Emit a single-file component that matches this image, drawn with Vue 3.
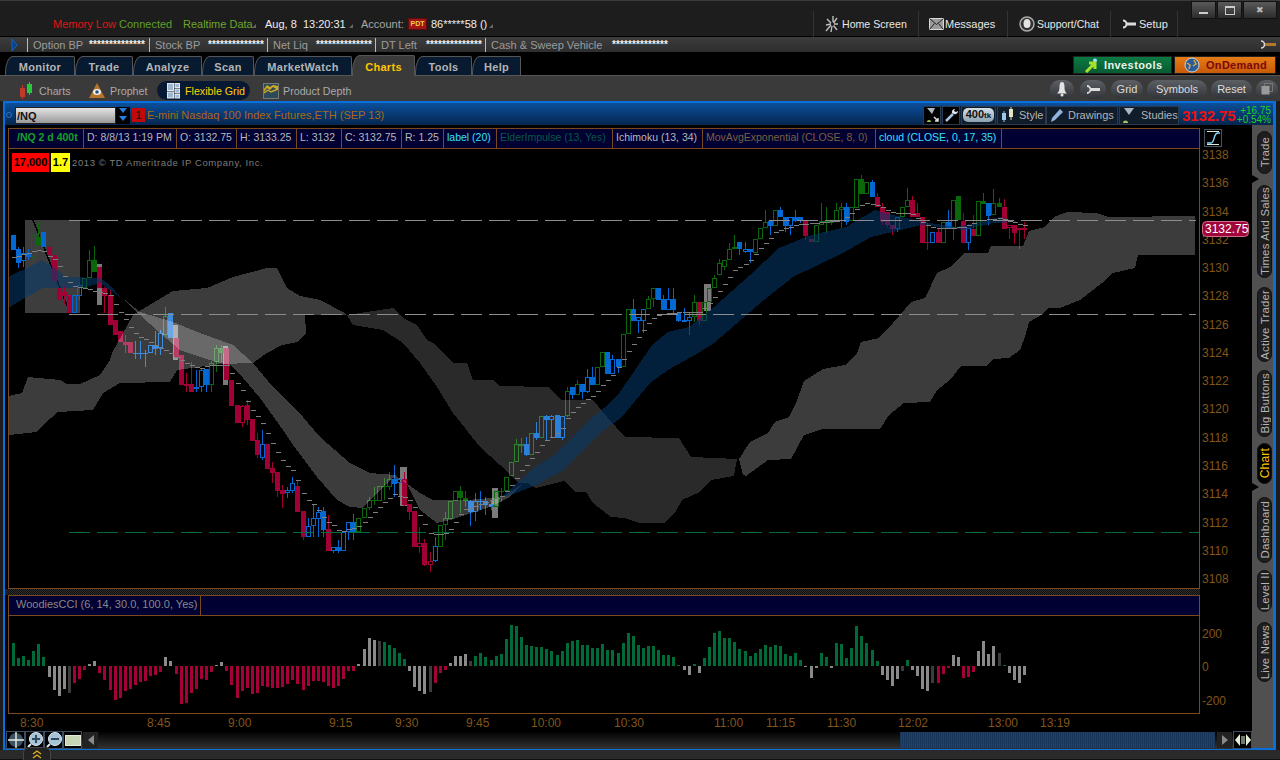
<script setup>
const info = [
  { label: 'Option BP', w: 122, lw: 56 },
  { label: 'Stock BP', w: 118, lw: 53 },
  { label: 'Net Liq', w: 108, lw: 43 },
  { label: 'DT Left', w: 110, lw: 45 },
  { label: 'Cash & Sweep Vehicle', w: 190, lw: 121 },
]
const tabs = [
  { t: 'Monitor', w: 70 }, { t: 'Trade', w: 58 }, { t: 'Analyze', w: 69 }, { t: 'Scan', w: 52 },
  { t: 'MarketWatch', w: 98 }, { t: 'Charts', w: 63, on: true }, { t: 'Tools', w: 57 }, { t: 'Help', w: 49 },
]
const pills = [
  { t: 'Grid', w: 32 }, { t: 'Symbols', w: 60 }, { t: 'Reset', w: 41 },
]
const legend = [
  { t: '/NQ 2 d 400t', w: 75, c: 'sym' }, { t: 'D: 8/8/13 1:19 PM', w: 93 }, { t: 'O: 3132.75', w: 60 },
  { t: 'H: 3133.25', w: 60 }, { t: 'L: 3132', w: 45 }, { t: 'C: 3132.75', w: 60 }, { t: 'R: 1.25', w: 42 },
  { t: 'label (20)', w: 53, c: 'cy' }, { t: 'ElderImpulse (13, Yes)', w: 116, c: 'el' }, { t: 'Ichimoku (13, 34)', w: 90 },
  { t: 'MovAvgExponential (CLOSE, 8, 0)', w: 173, c: 'ma' }, { t: 'cloud (CLOSE, 0, 17, 35)', w: 126, c: 'cy' },
]
const sideTabs = [
  { t: 'Trade', h: 43, m: 6 }, { t: 'Times And Sales', h: 93, m: 11 }, { t: 'Active Trader', h: 75, m: 9 },
  { t: 'Big Buttons', h: 67, m: 8 }, { t: 'Chart', h: 41, m: 6, on: true }, { t: 'Dashboard', h: 66, m: 13 },
  { t: 'Level II', h: 42, m: 7 }, { t: 'Live News', h: 60, m: 10 },
]
const priceLabels = [3138, 3136, 3134, 3132, 3130, 3128, 3126, 3124, 3122, 3120, 3118, 3116, 3114, 3112, 3110, 3108]
  .map((p, i) => ({ p, y: Math.round(159 + i * 28.27) }))
const timeLabels = [
  ['8:30', 20], ['8:45', 147], ['9:00', 228], ['9:15', 329], ['9:30', 395], ['9:45', 466], ['10:00', 531],
  ['10:30', 614], ['11:00', 714], ['11:15', 766], ['11:30', 827], ['12:02', 898], ['13:00', 988], ['13:19', 1040],
]

const colors = { g: '#0a680a', b: '#0468d2', r: '#a00036' }
const candles = `B235,250 B249,263,247,268 b253,261,247,267 B253,257,249,260 g235,258,235,262 G237,245,222,246 B232,247 r247,255,245,258
r255,281 r288,300 r292,296,285,305 r295,313 b295,313 b285,296,282,300 g278,288 g260,278,250,278 G260,272,246,272 r267,288 r288,296,287,313
r295,325,290,325 r320,335 r331,342 r342,345,335,353 r342,353 B353,354,341,359 B353,354,341,359 B353,354,350,367 b345,353 B345,349,331,355
b333,348,330,355 g316,335,307,335 B313,338 r338,357 r355,385 r384,386,373,392 r384,392,362,392 B387,389,370,392 b370,387,368,392 B369,385,369,392
g363,385,361,392 g348,362,345,372 G348,353,345,362 r348,380 r380,406 r405,423 R406,423,405,427 r405,420,400,425 r419,441 r440,455,433,458
b444,458,430,460 r444,469 r468,473,462,483 r472,491,472,497 r490,494,485,508 b490,493,487,498 b483,491,477,493 r486,512,480,512 r511,537,511,540
b526,537,518,537 b518,526,505,537 b512,519,507,537 B511,530,507,537 r529,551,515,551 b547,551,547,553 B547,551,540,553 b532,551 b522,532,522,540
B522,532,514,540 g518,532 g508,518 g500,508,497,510 G500,501,487,505 g486,501 G486,487,478,500 g479,487,472,490 B479,484,465,497 b479,483,478,497
r479,505,472,506 r504,512,504,520 r511,547 R543,547,527,553 r543,565,539,566 R561,565,552,572 b546,561,537,562 g525,547 g518,525,512,540 g501,519
g491,501 G491,498,486,513 G498,501,491,507 B501,512,500,526 b501,512,493,521 B501,502,491,510 B501,505,497,515 B504,507,501,510 g491,507 G491,492,488,502 g477,491
g462,476 g444,462,439,462 G444,446,438,453 B444,455,437,456 g433,455 B433,438,422,440 g416,438 B416,420,415,440 b416,420,415,438 B415,438
b416,438,416,440 g391,416,387,417 B387,395,387,399 g384,395,380,395 B384,392,384,399 b377,392,369,393 B377,385,367,385 g367,385 g352,367 B352,374
b359,374,355,374 B359,367,359,373 g334,367 g309,334 B309,321,299,321 b317,321,317,333 b309,321,309,333 g299,309,296,309 g288,299,288,307 B288,300
B299,310,295,310 b299,310,288,310 B299,310,288,313 B313,321,313,322 B320,322,308,322 b317,321,312,335 g302,317,295,322 r302,321,302,325 g302,321 g288,302
g278,288,275,288 g263,275,259,275 g260,267,260,270 g249,260,243,260 g247,249,235,249 B242,249,242,255 b249,252,242,253 B249,252,249,263 g239,253 g228,239
g222,228,210,228 B221,226,221,235 g210,226 B210,217,207,217 B217,226,217,232 b217,226,217,235 B217,221,210,222 B217,221,217,223 r221,236,221,240 r239,242
g225,242 g221,225,203,225 G221,223,207,233 G221,223,221,225 g210,221,203,221 g207,210,203,228 B207,222,203,225 g207,221 g179,208 G179,194,175,194
g182,194 B182,197,180,197 r197,207,193,207 r207,222,203,225 r212,225,212,227 r225,229,225,235 b217,229,217,232 g207,217 g200,207,188,207 r200,217,196,217
r213,217,203,217 r217,243 r242,243,223,250 b232,243 r232,243,228,243 g222,243 B222,228,210,228 g200,228,200,240 G196,220 r221,243,213,243
b228,243,228,250 r229,236,215,236 g201,236 G201,204,193,204 B203,216,203,225 g203,215,189,215 G203,207,198,207 r207,229,199,229 R225,228,225,239 r225,233,225,244
r228,230,228,249 r228,230,222,239`
  .trim().split(/\s+/).map((s, i) => {
    const t = s[0]
    const [a, b, c, d] = s.slice(1).split(',').map(Number)
    const x = Math.round(13 + 5.08 * i)
    return {
      id: i, x, top: a, bot: b, wt: c ?? a, wb: d ?? b,
      hollow: t === 'g' || t === 'b' || t === 'R',
      color: colors[t.toLowerCase()],
    }
  })

const highlights = [
  [97, 264, 5, 41], [173, 325, 5, 35], [223, 346, 5, 39], [400, 467, 7, 39], [492, 488, 6, 30], [704, 284, 7, 27],
]

const trail = [[13, 257], [40, 249], [55, 260], [60, 268], [65, 278], [72, 285], [110, 295], [118, 309], [124, 317], [132, 330], [137, 335], [147, 340], [190, 365], [200, 368], [210, 365], [227, 365], [232, 375], [242, 390], [250, 407], [262, 423], [267, 433], [277, 452], [283, 462], [292, 470], [298, 482], [302, 492], [308, 500], [315, 505], [325, 520], [333, 525], [340, 532], [355, 527], [363, 523], [372, 514], [378, 508], [383, 503], [393, 494], [408, 498], [422, 520], [428, 533], [440, 534], [448, 532], [463, 510], [477, 505], [500, 497], [510, 487], [521, 470], [525, 466], [541, 445], [546, 440], [561, 430], [568, 416], [580, 404], [593, 395], [607, 380], [614, 373], [632, 345], [641, 333], [646, 325], [655, 316], [668, 313], [680, 312], [700, 312], [711, 301], [718, 292], [723, 285], [734, 270], [743, 265], [750, 260], [754, 255], [759, 249], [768, 240], [775, 232], [786, 228], [795, 225], [812, 223], [843, 220], [857, 208], [864, 203], [879, 205], [893, 213], [911, 213], [929, 227], [943, 228], [964, 227], [979, 220], [1000, 218], [1014, 222], [1023, 225]]
const trailAt = x => {
  for (let k = 1; k < trail.length; k++) {
    if (x <= trail[k][0]) {
      const [x0, y0] = trail[k - 1]
      const [x1, y1] = trail[k]
      return Math.round(y0 + (y1 - y0) * (x - x0) / (x1 - x0))
    }
  }
  return 225
}
const ticks = candles.map(c => ({ id: c.id, x: c.x - 1, y: trailAt(c.x) }))

const cloudA = '9,396 22,393 28,377 60,380 67,384 80,384 100,375 110,360 112,353 133,315 173,291 207,288 233,277 267,268 277,268 287,288 300,296 320,300 343,312 347,315 305,315 306,333 297,342 282,345 267,353 253,363 220,364 177,370 170,382 120,383 103,393 93,410 58,412 43,425 37,432 9,435'
const band = '120,296 140,312 173,322 200,333 233,345 253,363 273,387 297,410 320,437 350,463 370,473 395,475 420,493 433,500 467,500 503,497 521,485 510,497 490,507 450,520 437,523 420,510 405,480 392,478 363,508 350,507 337,500 317,477 293,445 283,430 260,398 243,378 230,365 220,363 200,357 180,350 160,333 140,315'
const cloudB = '347,315 393,308 403,318 417,325 427,340 433,343 453,363 467,363 473,380 493,380 500,386 548,387 561,400 593,400 607,417 625,437 679,438 691,457 737,459 734,476 711,480 700,492 682,500 675,513 664,523 639,523 625,518 611,517 593,503 586,492 575,492 564,481 536,488 527,483 518,483 500,465 480,447 453,413 437,387 420,363 403,343 383,330 353,325'
const cloudC = '739,459 750,442 768,433 775,422 789,417 796,403 804,381 823,369 845,365 857,353 861,342 879,338 893,323 911,302 925,298 937,273 950,267 964,253 988,253 991,246 1023,246 1029,231 1045,227 1054,217 1067,212 1097,213 1108,217 1195,216 1195,255 1138,255 1135,268 1113,273 1102,283 1080,300 1060,308 1048,308 1043,314 1029,322 1025,337 1020,350 1009,358 993,359 986,366 961,366 950,380 937,390 930,402 904,403 889,415 880,429 823,429 804,435 791,459 768,460 757,468 746,476 743,475'
const ribbonL = '8,277 33,265 42,260 53,267 67,277 100,278 110,285 120,297 100,283 83,288 67,288 43,288 25,298 8,308'
const ribbonR = '500,498 534,468 554,455 593,417 604,408 620,392 652,345 668,332 689,327 714,307 750,275 779,248 811,235 846,227 875,210 893,215 929,223 957,227 1000,217 1018,222 993,223 964,230 921,225 893,232 871,237 843,253 793,277 764,300 714,343 700,352 668,370 650,383 621,418 600,433 564,470 536,485 511,495'

const cciColors = { g: '#006b38', r: '#a4003a', n: '#8a8a8a', d: '#3c3c3c' }
const cci = `g23 g8 g10 g6 g15 g22 g9 n-11 n-24 n-30 n-23 d-27 r-17 r-13 r-4 n2 n5 r-7 r-14 r-24 r-34 r-32 r-25 r-23 r-19 r-16 r-15 r-10 r-9 r-6 n9 n5 r-8 r-38 r-37 r-27 r-23 r-13 r-14 r-6 n1 n4 r-5 r-19 r-32 r-25 r-22 r-28 r-27 r-20 r-21 r-22 r-22 r-21 r-18 r-14 r-18 r-24 r-20 r-15 r-15 r-16 r-20 r-22 r-20 r-13 r-5 r-5 n2 n17 n28 n26 d25 g24 g21 g18 g13 g7 n-5 n-21 n-25 n-28 d-26 r-17 r-7 r-4 n3 n10 n10 n12 d5 g10 g13 g9 g6 g10 g12 g27 g41 g40
g29 g21 g20 g19 g19 g17 g15 g11 g15 g23 g25 g26 g21 g21 g18 g18 g22 g16 g16 g13 g23 g33 g30 g21 g18 g20 g20 g16 g11 g11 g9 g1 n-4 n-9 g2 n-7 g8 g19 g33 g35 g28 g28 g24 g17 g15 g10 g13 g17 g21 g19 g21 g20 g12 g10 g13 g6 n-1 n-12 n-2 g13 g9 n-2 g23 g22 g8 g18 g40 g30 g23 g16 g5 n-9 n-14 n-20 n-13 d-5 g6 n-4 n-10 n-23 n-25 d-17 r-17 r-8 r-2 n11 n9 r-12 r-11 r-6 n15 n25 n12 n20 d13 g1 n-7 n-14 n-17 n-9`
  .trim().split(/\s+/).map((s, i) => {
    const v = Number(s.slice(1))
    return {
      id: i, x: Math.round(12 + 5.08 * i), y: v > 0 ? 666 - v : 666, h: Math.abs(v), color: cciColors[s[0]],
    }
  })
</script>

<template>
  <div class="app">
    <header class="topbar">
      <div class="status">
        <span class="mem">Memory Low</span>
        <span class="conn">Connected</span>
        <span class="rt">Realtime Data</span>
        <i class="tri rt-tri"></i>
        <span class="date">Aug, 8 &nbsp;13:20:31</span>
        <i class="tri date-tri"></i>
        <span class="acct">Account:</span>
        <span class="pdt">PDT</span>
        <span class="num">86*****58 ()</span>
        <i class="tri"></i>
      </div>
      <nav class="nav">
        <div class="nav-item home">
          <svg width="14" height="19" viewBox="0 0 14 19"><path d="M8 1v6M12 3L8.5 8M13 9H9M12 15L8.500 10.500M6 17l1-6M1 16l5-6M1 10l5-1M2 4l4 4" stroke="#bdbdbd" stroke-width="1.400" fill="none"/></svg>
          <span>Home Screen</span>
        </div>
        <div class="nav-item mail">
          <svg width="15" height="12" viewBox="0 0 15 12"><rect x=".5" y=".5" width="14" height="11" fill="#9a9a9a" stroke="#d8d8d8"/><path d="M.5.5l7 6 7-6M.5 11.500l5-6M14.500 11.500l-5-6" stroke="#222" fill="none"/></svg>
          <span>Messages</span>
        </div>
        <div class="nav-item chat">
          <svg width="16" height="16" viewBox="0 0 16 16"><circle cx="8" cy="8" r="7" fill="#333" stroke="#aaa" stroke-width="1.500"/><ellipse cx="8" cy="7.500" rx="3.500" ry="4.500" fill="#e4e4e4"/></svg>
          <span>Support/Chat</span>
        </div>
        <div class="nav-item setup">
          <svg width="14" height="10" viewBox="0 0 14 10"><path d="M1 1.500a3.500 3.500 0 1 1 0 7" stroke="#ddd" stroke-width="2" fill="none"/><rect x="5" y="3.500" width="9" height="3" fill="#ddd"/></svg>
          <span>Setup</span>
        </div>
      </nav>
      <div class="winbtns">
        <button class="wb w1"><i class="min"></i></button>
        <button class="wb w1"><i class="max"></i></button>
        <button class="wb w2"><span>✖</span></button>
      </div>
    </header>

    <section class="infobar">
      <svg class="info-arrow" width="8" height="14" viewBox="0 0 8 14"><path d="M1 1l5 6-5 6z" fill="#0a3f8c" stroke="#1565c0"/></svg>
      <div v-for="it in info" :key="it.label" class="info-item" :style="{ width: it.w + 'px' }">
        <span class="info-label" :style="{ width: it.lw + 'px' }">{{ it.label }}</span>
        <span class="info-stars">**************</span>
      </div>
      <svg class="info-wrench" width="16" height="9" viewBox="0 0 16 9"><path d="M1 1a3.500 3.500 0 1 1 0 7" stroke="#d8d8d8" stroke-width="1.600" fill="none"/><rect x="5" y="3" width="11" height="3" fill="#b07a2a"/></svg>
    </section>

    <section class="tabrow">
      <div v-for="t in tabs" :key="t.t" class="tab" :class="{ on: t.on }" :style="{ width: t.w + 'px' }">{{ t.t }}</div>
      <div class="promo green">
        <svg width="15" height="15" viewBox="0 0 15 15"><circle cx="11" cy="2.500" r="2" fill="#9fe0ff"/><path d="M2 14L10 6M5 5h6v6" stroke="#a8e030" stroke-width="3" fill="none"/></svg>
        <span>Investools</span>
      </div>
      <div class="promo orange">
        <svg width="16" height="16" viewBox="0 0 16 16"><circle cx="8" cy="8" r="7" fill="#2c5c9a" stroke="#cfd8e0"/><path d="M3 6l3 2-1 4M10 3l2 4-3 2" stroke="#d9ab35" fill="none" stroke-width="1.500"/></svg>
        <span>OnDemand</span>
      </div>
    </section>

    <section class="subbar">
      <div class="sub s1">
        <svg width="14" height="18" viewBox="0 0 14 18"><rect x="1" y="6" width="5" height="9" fill="#c0392b"/><rect x="3" y="3" width="1" height="14" fill="#c0392b"/><rect x="8" y="2" width="5" height="9" fill="#27c93a"/><rect x="10" y="0" width="1" height="13" fill="#27c93a"/></svg>
        <span>Charts</span>
      </div>
      <div class="sub s2">
        <svg width="16" height="16" viewBox="0 0 16 16"><path d="M8 0L16 15H0z" fill="#b5742a"/><ellipse cx="8" cy="9" rx="4" ry="3" fill="#eee"/><circle cx="8" cy="9" r="1.800" fill="#2a4f80"/></svg>
        <span>Prophet</span>
      </div>
      <div class="sub s3">
        <svg width="13" height="16" viewBox="0 0 13 16"><rect x=".5" y=".5" width="6" height="7" fill="#9cb8d0" stroke="#e8e8e8"/><rect x=".5" y="9" width="6" height="6" fill="#9cb8d0" stroke="#e8e8e8"/><rect x="8" y=".5" width="4.500" height="4" fill="#9cb8d0" stroke="#e8e8e8"/><rect x="8" y="6" width="4.500" height="4" fill="#9cb8d0" stroke="#e8e8e8"/><rect x="8" y="11.500" width="4.500" height="3.500" fill="#9cb8d0" stroke="#e8e8e8"/></svg>
        <span>Flexible Grid</span>
      </div>
      <div class="sub s4">
        <svg width="16" height="16" viewBox="0 0 16 16"><rect x=".5" y=".5" width="15" height="15" fill="#2d4a5a" stroke="#777"/><path d="M1 9l3-4 3 2 3-3 5 3v-4l-5-1-3 2-3-2-3 4z" fill="#d0a820"/><path d="M1 10l4-3 3 2 7-3" stroke="#d0a820" stroke-width="1.400" fill="none"/></svg>
        <span>Product Depth</span>
      </div>
      <div class="sub-right">
        <button class="pill p-icon bell">
          <svg width="12" height="16" viewBox="0 0 12 16"><path d="M6 1C4 1 3.500 3 3.500 6 3.500 10 2.500 11 1 12.500h10C9.500 11 8.500 10 8.500 6 8.500 3 8 1 6 1z" fill="#e4e4e4"/><circle cx="6" cy="14" r="1.500" fill="#e4e4e4"/></svg>
        </button>
        <button class="pill p-icon wrench">
          <svg width="14" height="9" viewBox="0 0 14 9"><path d="M1 1a3.500 3.500 0 1 1 0 7" stroke="#ddd" stroke-width="1.800" fill="none"/><rect x="5" y="3" width="9" height="3" fill="#ddd"/></svg>
        </button>
        <button v-for="p in pills" :key="p.t" class="pill" :style="{ width: p.w + 'px' }">{{ p.t }}</button>
        <button class="pill p-icon copy">
          <svg width="12" height="12" viewBox="0 0 12 12"><rect x="3.500" y=".5" width="8" height="8" fill="none" stroke="#777"/><rect x=".5" y="3" width="8" height="8.500" fill="#9a9a9a"/></svg>
        </button>
      </div>
    </section>

    <main class="window">
      <div class="titlebar">
        <i class="dot"></i>
        <div class="symbol">/NQ</div>
        <div class="dd">
          <svg width="12" height="16" viewBox="0 0 12 16"><path d="M2 1h8L6 6zM2 9h8l-4 5z" fill="#2a7ce0"/></svg>
        </div>
        <div class="redone">1</div>
        <div class="fullname">E-mini Nasdaq 100 Index Futures,ETH (SEP 13)</div>
        <div class="tools">
          <div class="tool ic t1">
            <svg width="15" height="17" viewBox="0 0 15 17"><path d="M2 1h8L7 7z" fill="#aab6c0"/><path d="M2 15a2 2 0 1 1 4 0z" fill="#9ccb60"/><path d="M9 10l4 4m0-3v3h-3" stroke="#ddd" fill="none" stroke-width="1.500"/></svg>
          </div>
          <div class="tool ic t2">
            <svg width="15" height="16" viewBox="0 0 15 16"><path d="M2 14L9 7" stroke="#a7c3e0" stroke-width="2.500"/><path d="M8 6a3 3 0 0 1 3-4l-1 2 2 1 2-1a3 3 0 0 1-4 3z" fill="#dfe6ee"/></svg>
          </div>
          <div class="tool t3"><span>400<small>tk</small></span></div>
          <div class="tool t4">
            <svg width="13" height="16" viewBox="0 0 13 16"><rect x="1" y="6" width="4" height="7" fill="#9ec6ea"/><rect x="2.500" y="4" width="1" height="11" fill="#9ec6ea"/><rect x="8" y="2" width="4" height="8" fill="#e4e4c0"/><rect x="9.500" y="0" width="1" height="13" fill="#e4e4c0"/></svg>
            <span>Style</span>
          </div>
          <div class="tool t5">
            <svg width="14" height="16" viewBox="0 0 14 16"><path d="M1 15l1-4 8-9 3 3-8 8z" fill="#8fb3dc"/></svg>
            <span>Drawings</span>
          </div>
          <div class="tool t6">
            <svg width="14" height="17" viewBox="0 0 14 17"><path d="M2 1h10L7 8z" fill="#aab6c0"/><path d="M1 16a2.500 2.500 0 1 1 5 0z" fill="#9ccb60"/></svg>
            <span>Studies</span>
          </div>
        </div>
        <div class="lastprice">3132.75</div>
        <div class="change"><span>+16.75</span><span>+0.54%</span></div>
      </div>

      <div class="winbody">
        <div class="mainarea">
          <div class="row">
            <div class="panel pricepanel">
              <div class="legend">
                <div v-for="l in legend" :key="l.t" class="cell" :class="l.c" :style="{ width: l.w + 'px' }">{{ l.t }}</div>
              </div>
              <svg class="plot" width="1190" height="438" viewBox="9 149 1190 438" shape-rendering="crispEdges">
                <rect x="25" y="220" width="55" height="93" fill="#3d3d3d"/>
                <line x1="33" y1="220" x2="70" y2="313" stroke="#000" stroke-width="1.500"/>
                <rect v-for="(h, n) in highlights" :key="n" :x="h[0]" :y="h[1]" :width="h[2]" :height="h[3]" fill="#7a7a7a"/>
                <g v-for="c in candles" :key="c.id">
                  <rect :x="c.x" :y="c.wt" width="1" :height="c.top - c.wt" :fill="c.color"/>
                  <rect :x="c.x" :y="c.bot" width="1" :height="c.wb - c.bot" :fill="c.color"/>
                  <rect v-if="c.hollow" :x="c.x - 1.500" :y="c.top + 0.500" width="4" :height="c.bot - c.top - 1" fill="none" :stroke="c.color"/>
                  <rect v-else :x="c.x - 2" :y="c.top" width="5" :height="c.bot - c.top" :fill="c.color"/>
                </g>
                <polygon :points="cloudB" fill="#fff" fill-opacity=".165"/>
                <polygon :points="cloudA" fill="#fff" fill-opacity=".235"/>
                <polygon :points="band" fill="#fff" fill-opacity=".235"/>
                <polygon :points="cloudC" fill="#fff" fill-opacity=".235"/>
                <polygon :points="ribbonL" fill="#03386c" fill-opacity=".55"/>
                <polygon :points="ribbonR" fill="#03386c" fill-opacity=".55"/>
                <rect v-for="t in ticks" :key="t.id" :x="t.x" :y="t.y" width="5" height="1" fill="#7e7e7e"/>
                <line x1="69" y1="220.500" x2="1196" y2="220.500" stroke="#8c8c8c" stroke-dasharray="21 7"/>
                <line x1="69" y1="314.500" x2="1196" y2="314.500" stroke="#8c8c8c" stroke-dasharray="21 7"/>
                <line x1="69" y1="532.500" x2="1199" y2="532.500" stroke="#006b38" stroke-dasharray="21 7"/>
              </svg>
              <div class="badges">
                <span class="b-red">17,000</span>
                <span class="b-yel">1.7</span>
                <span class="copyright">2013 © TD Ameritrade IP Company, Inc.</span>
              </div>
            </div>
            <svg class="axis" width="53" height="461" viewBox="1200 128 53 461">
              <rect x="1204.500" y="129.500" width="17" height="17" fill="#000" stroke="#46525e"/>
              <path d="M1207 143h4c4 0 2-10 7-10h2" stroke="#7fd8ff" stroke-width="1.400" fill="none"/>
              <path d="M1207 144.500h12M1207 131.500h12" stroke="#d8e8d8"/>
              <text v-for="l in priceLabels" :key="l.p" class="axtext" x="1202" :y="l.y">{{ l.p }}</text>
              <rect x="1202.500" y="221.500" width="46" height="15" rx="4" fill="#a0063c" stroke="#d06a8a"/>
              <text class="tagtext" x="1205" y="233">3132.75</text>
            </svg>
          </div>
          <div class="divider"></div>
          <div class="row">
            <div class="panel ccipanel">
              <div class="legend cci-legend">
                <div class="cell cci-cell">WoodiesCCI (6, 14, 30.0, 100.0, Yes)</div>
              </div>
              <svg class="plot" width="1190" height="97" viewBox="9 616 1190 97" shape-rendering="crispEdges">
                <rect v-for="b in cci" :key="b.id" :x="b.x" :y="b.y" width="3" :height="b.h" :fill="b.color"/>
              </svg>
            </div>
            <svg class="axis" width="53" height="119" viewBox="1200 595 53 119">
              <text class="axtext" x="1202" y="638">200</text>
              <text class="axtext" x="1202" y="671">0</text>
              <text class="axtext" x="1202" y="705">-200</text>
            </svg>
          </div>
          <svg class="timeaxis" width="1247" height="17" viewBox="5 714 1247 17">
            <text v-for="t in timeLabels" :key="t[0]" class="axtext" :x="t[1]" y="727">{{ t[0] }}</text>
          </svg>
          <div class="toolbar">
            <button class="tb">
              <svg width="16" height="16" viewBox="0 0 16 16"><circle cx="8" cy="8" r="7" fill="#3c5166"/><path d="M8 0v16M0 8h16" stroke="#e8efe0" stroke-width="1.400"/></svg>
            </button>
            <button class="tb">
              <svg width="16" height="16" viewBox="0 0 16 16"><circle cx="9" cy="7" r="6.500" fill="#a6c4d8" stroke="#dfe9ee"/><path d="M9 3v8M5 7h8" stroke="#35485a" stroke-width="2"/><path d="M1 15l3-3" stroke="#dfe9ee" stroke-width="2"/></svg>
            </button>
            <button class="tb">
              <svg width="16" height="16" viewBox="0 0 16 16"><circle cx="9" cy="7" r="6.500" fill="#a6c4d8" stroke="#dfe9ee"/><path d="M5 7h8" stroke="#35485a" stroke-width="2"/><path d="M1 15l3-3" stroke="#dfe9ee" stroke-width="2"/></svg>
            </button>
            <button class="tb tb-rect"><i></i></button>
            <button class="sc left"><svg width="6" height="10" viewBox="0 0 6 10"><path d="M6 0v10L0 5z" fill="#8a8a8a"/></svg></button>
            <div class="track"><div class="thumb"></div></div>
            <button class="sc"><svg width="6" height="10" viewBox="0 0 6 10"><path d="M0 0v10l6-5z" fill="#8a8a8a"/></svg></button>
            <button class="tb tb-end">
              <svg width="16" height="12" viewBox="0 0 16 12"><path d="M5 0v12L0 6zM11 0v12l5-6z" fill="#e4efd8"/><path d="M7 2v8M9 2v8" stroke="#e4efd8"/></svg>
            </button>
          </div>
        </div>
        <aside class="sidebar">
          <div v-for="s in sideTabs" :key="s.t" class="sidetab" :class="{ on: s.on }" :style="{ height: s.h + 'px', marginTop: s.m + 'px' }">
            <span>{{ s.t }}</span>
          </div>
          <i class="notch n1"></i>
          <i class="notch n2"></i>
        </aside>
      </div>
    </main>
    <div class="foot">
      <div class="uptab">
        <svg width="10" height="9" viewBox="0 0 10 9"><path d="M1 4l4-3 4 3M1 8l4-3 4 3" stroke="#e0b020" stroke-width="1.300" fill="none"/></svg>
      </div>
    </div>
  </div>
</template>

<style>
html, body { margin: 0; background: #1b1b1b; }
</style>

<style scoped>
.app {
  position: relative;
  width: 1280px;
  height: 760px;
  overflow: hidden;
  display: flex;
  flex-direction: column;
  background: #1c1c1c;
  font-family: "Liberation Sans", Arial, sans-serif;
  font-size: 11px;
  color: #ccc;
}
button { border: 0; padding: 0; margin: 0; font: inherit; color: inherit; background: none; }

/* top bar */
.topbar {
  height: 35px;
  flex: none;
  display: flex;
  border-top: 1px solid #3a3a3a;
  border-bottom: 1px solid #000;
  background: #1d1d1d;
  position: relative;
}
.status { display: flex; align-items: center; padding: 13px 0 0 53px; height: 19px; white-space: nowrap; }
.mem { color: #e01414; width: 66px; }
.conn { color: #5f9e28; width: 64px; }
.rt { color: #6fa52c; width: 69px; }
.tri { width: 0; height: 0; margin: 5px 0 0 0; border-left: 4px solid transparent; border-bottom: 4px solid #666; }
.rt-tri { margin-right: 9px; }
.date { color: #eee; width: 84px; }
.date-tri { margin-right: 8px; }
.acct { color: #a8a8a8; width: 47px; }
.pdt { width: 19px; height: 12px; margin-right: 4px; background: #a01515; border: 1px solid #5c0c0c; box-sizing: border-box; font-size: 7px; font-weight: bold; color: #f0d040; text-align: center; line-height: 10px; }
.num { color: #eee; margin-right: 2px; }
.nav { position: absolute; left: 813px; top: 1px; height: 35px; display: flex; }
.nav-item { display: flex; align-items: center; gap: 3px; box-sizing: border-box; height: 26px; margin-top: 9px; border-left: 1px solid #333; color: #e8e8e8; padding-left: 11px; white-space: nowrap; }
.home { width: 105px; font-size: 10.600px; }
.mail { width: 89px; padding-left: 10px; gap: 1px; }
.chat { width: 103px; gap: 2px; padding-left: 11px; font-size: 10.500px; }
.setup { width: 68px; padding-left: 11px; border-right: 1px solid #333; gap: 3px; }
.winbtns { position: absolute; right: 3px; top: 0; display: flex; gap: 1px; }
.wb { height: 18px; background: linear-gradient(#5a5a5a, #2c2c2c); border: 1px solid #111; box-sizing: border-box; display: flex; align-items: center; justify-content: center; color: #bbb; font-size: 9px; }
.w1 { width: 25px; }
.w2 { width: 34px; }
.min { width: 9px; height: 2px; background: #ccc; margin-top: 6px; }
.max { width: 8px; height: 6px; border: 1px solid #ccc; border-top-width: 2px; }

/* info bar */
.infobar {
  height: 15px;
  flex: none;
  display: flex;
  align-items: center;
  position: relative;
  padding-left: 27px;
  background: linear-gradient(#3c3c3c, #2e2e2e);
  border-bottom: 1px solid #000;
}
.info-arrow { position: absolute; left: 11px; top: 1px; }
.info-item { display: flex; align-items: center; height: 14px; box-sizing: border-box; border-left: 1px solid #bbb; padding-left: 5px; white-space: nowrap; }
.info-label { color: #9c9c9c; flex: none; }
.info-stars { color: #f0f0f0; font-size: 10px; letter-spacing: .1px; font-weight: bold; line-height: 10px; }
.info-wrench { position: absolute; right: 4px; top: 3px; }

/* tabs */
.tabrow {
  height: 22px;
  flex: none;
  display: flex;
  align-items: flex-end;
  padding-left: 5px;
  background: #000;
  border-bottom: 1px solid #555;
}
.tab {
  height: 19px;
  flex: none;
  box-sizing: border-box;
  background: #071a30;
  border: 1px solid #555;
  border-bottom: 0;
  border-radius: 8px 2px 0 0 / 16px 2px 0 0;
  text-align: center;
  line-height: 20px;
  font-weight: bold;
  color: #b4b4b4;
  letter-spacing: .3px;
}
.tab.on { height: 21px; line-height: 23px; background: #3a3a3a; color: #ffc400; margin-bottom: -1px; position: relative; }
.promo { height: 18px; display: flex; align-items: center; font-weight: bold; box-sizing: border-box; border: 1px solid #222; margin-bottom: 1px; }
.green { margin-left: auto; width: 99px; padding-left: 10px; gap: 5px; background: linear-gradient(#0b7a42, #0a5a32); color: #e8f4e8; letter-spacing: .4px; }
.orange { width: 102px; margin: 0 4px 1px 2px; padding-left: 9px; gap: 6px; background: linear-gradient(#e57b14, #c85a0a); color: #7c0808; letter-spacing: .3px; }
.green span, .orange span { white-space: nowrap; }

/* sub bar */
.subbar {
  height: 25px;
  flex: none;
  box-sizing: border-box;
  padding-top: 4px;
  display: flex;
  align-items: center;
  background: #3a3a3a;
  padding-left: 19px;
  color: #aaa;
  font-size: 10.700px;
}
.sub { display: flex; align-items: center; flex: none; white-space: nowrap; }
.s1 { width: 70px; gap: 6px; }
.s2 { width: 68px; gap: 5px; }
.s3 { width: 93px; height: 19px; box-sizing: border-box; padding-left: 10px; gap: 5px; background: #081a33; border-radius: 10px; color: #ffd000; margin-right: 13px; }
.s4 { gap: 4px; }
.sub-right { margin-left: auto; display: flex; gap: 4px; margin-right: 2px; margin-top: -3px; font-size: 11px; }
.pill { height: 19px; border-radius: 10px; background: linear-gradient(#5c6064, #303438); color: #dcdcdc; display: flex; align-items: center; justify-content: center; }
.p-icon.bell { width: 24px; margin-right: 2px; }
.p-icon.wrench { width: 26px; margin-right: 1px; }
.p-icon.copy { width: 22px; }

/* window */
.window {
  flex: 1;
  min-height: 0;
  display: flex;
  flex-direction: column;
  margin: 0 4px 0 3px;
  border: 2px solid #0a6fdc;
  border-width: 2px 3px 2px 2px;
}
.titlebar {
  height: 22px;
  flex: none;
  box-sizing: border-box;
  padding-top: 2px;
  display: flex;
  align-items: center;
  background: linear-gradient(#0b4f9c, #06264e);
  position: relative;
}
.dot { width: 4px; height: 4px; border: 1px solid #2a74c8; border-radius: 50%; margin-left: 1px; }
.symbol { margin-left: 3px; width: 101px; height: 17px; box-sizing: border-box; padding-left: 1px; background: linear-gradient(#e4e4e4, #999); color: #111; font-weight: bold; line-height: 17px; border: 1px solid #222; }
.dd { width: 14px; height: 17px; background: #000; display: flex; align-items: center; justify-content: center; }
.redone { width: 13px; height: 14px; margin-left: 2px; background: #c00a0a; color: #111; text-align: center; line-height: 15px; }
.fullname { margin-left: 2px; color: #b0680e; white-space: nowrap; letter-spacing: .02px; }
.tools { margin-left: auto; display: flex; height: 19px; background: #0a2040; }
.tool { height: 19px; box-sizing: border-box; border: 1px solid #2a3a50; display: flex; align-items: center; color: #b4b4b4; flex: none; white-space: nowrap; background: #111c2a; }
.ic { background: #000; justify-content: center; width: 18px; }
.t2 { margin-left: 1px; }
.t3 { width: 35px; margin-left: 1px; justify-content: center; }
.t3 span { background: linear-gradient(#d4e0e8, #8ca0b0); color: #111; border-radius: 5px; padding: 0 3px; font-weight: bold; font-size: 11px; line-height: 13px; }
.t3 small { font-size: 8px; }
.t4 { width: 49px; padding-left: 3px; gap: 5px; margin-left: 1px; }
.t5 { width: 72px; padding-left: 3px; gap: 4px; }
.t6 { width: 60px; padding-left: 2px; gap: 5px; margin-left: 1px; }
.lastprice { width: 57px; margin-left: 3px; color: #f01010; font-weight: bold; font-size: 15px; letter-spacing: -.1px; white-space: nowrap; }
.change { display: flex; flex-direction: column; width: 32px; color: #1fcf28; font-size: 10px; line-height: 9px; align-items: flex-end; margin-right: 2px; }

.winbody { flex: 1; min-height: 0; display: flex; }
.mainarea { width: 1247px; flex: none; display: flex; flex-direction: column; background: #000; padding-top: 3px; box-sizing: border-box; }
.row { display: flex; flex: none; }
.panel { position: relative; margin-left: 3px; width: 1192px; box-sizing: border-box; border: 1px solid #7a4a1c; flex: none; }
.pricepanel { height: 461px; }
.ccipanel { height: 119px; }
.legend { height: 20px; display: flex; background: #000033; border-bottom: 1px solid #7a4a1c; box-sizing: border-box; font-size: 10.500px; }
.plot { display: block; }
.cell { box-sizing: border-box; border-right: 1px solid #7a4a1c; line-height: 17px; padding-left: 3px; white-space: nowrap; color: #b8b8b8; flex: none; overflow: hidden; }
.sym { color: #16a028; font-weight: bold; padding-left: 8px; }
.cy { color: #35e0ff; }
.el { color: #0a5a44; }
.ma { color: #7a6040; }
.cci-cell { width: 192px; padding-left: 7px; color: #888; font-size: 11px; }
.badges { position: absolute; left: 3px; top: 24px; display: flex; align-items: center; }
.b-red { width: 37px; height: 19px; background: #f00; color: #000; font-weight: bold; font-size: 11px; line-height: 19px; text-align: center; }
.b-yel { width: 19px; height: 19px; margin-left: 2px; background: #ff0; color: #000; font-weight: bold; line-height: 19px; text-align: center; }
.copyright { margin-left: 2px; color: #7c7c7c; font-size: 9.500px; letter-spacing: .6px; white-space: nowrap; }
.axis { display: block; flex: none; margin-left: 0; }
.axtext { fill: #845518; font-family: "Liberation Sans", Arial, sans-serif; font-size: 12px; }
.tagtext { fill: #fff; font-family: "Liberation Sans", Arial, sans-serif; font-size: 12px; }
.divider {
  height: 6px;
  width: 1195px;
  flex: none;
  background: repeating-conic-gradient(#2e2e2e 0 25%, #0e0e0e 0 50%) 0 0 / 2px 2px;
}
.timeaxis { display: block; flex: none; }
.toolbar { height: 18px; flex: none; display: flex; align-items: stretch; background: linear-gradient(#000, #333); padding-left: 1px; }
.tb { width: 19px; flex: none; box-sizing: border-box; border: 1px solid #3a4f63; background: #000; display: flex; align-items: center; justify-content: center; }
.tb-rect i { width: 14px; height: 9px; background: #c6d6b4; border: 1px solid #e0e8d8; box-sizing: content-box; display: block; }
.sc { width: 15px; flex: none; margin: 1px 0; background: #222; display: flex; align-items: center; justify-content: center; }
.sc.left { margin-left: 1px; }
.track { flex: 1; margin: 1px 2px 1px 1px; display: flex; justify-content: flex-end; }
.thumb { width: 315px; background: repeating-linear-gradient(90deg, #17365a 0 1px, #1f4268 1px 2px); }
.tb-end { margin-left: 1px; width: 19px; }

/* side tabs */
.sidebar { position: relative; flex: 1; background: #505050; display: flex; flex-direction: column; align-items: flex-end; padding-right: 1px; box-sizing: border-box; }
.sidetab {
  flex: none;
  width: 15px;
  box-sizing: border-box;
  border: 1px solid #111;
  border-radius: 8px;
  background: #1e1e1e;
  color: #b4b4b4;
  display: flex;
  align-items: center;
  justify-content: center;
  overflow: hidden;
}
.sidetab span { writing-mode: vertical-rl; transform: rotate(180deg); white-space: nowrap; font-size: 11.400px; letter-spacing: .2px; }
.sidetab.on { background: #000; color: #ffc400; }
.sidetab.on span { font-size: 12px; }
.notch { position: absolute; left: 0; width: 0; height: 0; border-top: 4px solid transparent; border-bottom: 4px solid transparent; border-left: 7px solid #000; }
.n1 { top: 50px; }
.n2 { top: 358px; }

.foot { height: 9px; flex: none; position: relative; background: #2a2a2a; border-bottom: 1px solid #111; box-sizing: content-box; }
.uptab { position: absolute; left: 23px; top: -3px; width: 28px; height: 13px; background: #222; border: 1px solid #444; border-bottom: 0; border-radius: 6px 6px 0 0; box-sizing: border-box; display: flex; align-items: center; justify-content: center; }
</style>
